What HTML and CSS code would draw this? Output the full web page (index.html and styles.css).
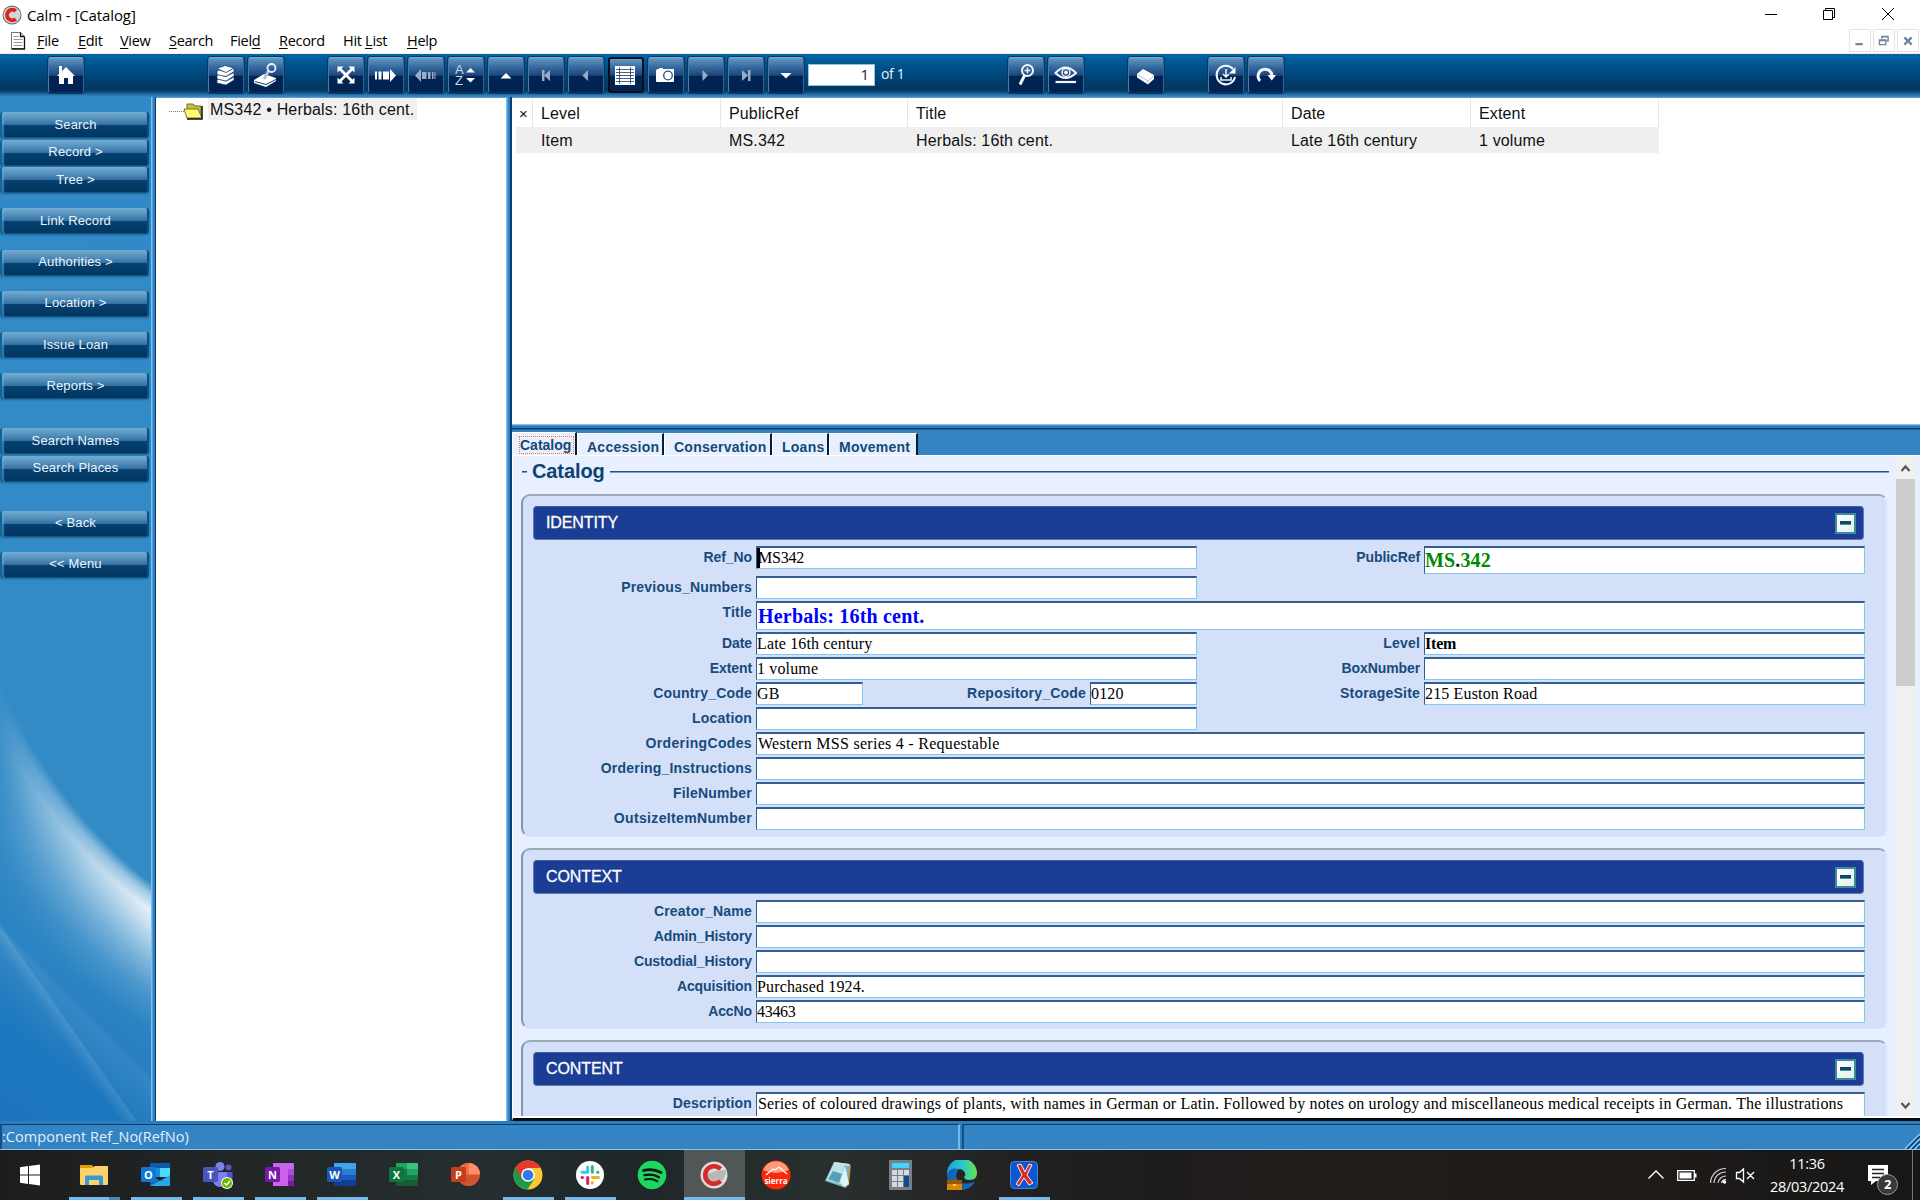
FILE: index.html
```html
<!DOCTYPE html>
<html lang="en">
<head>
<meta charset="utf-8">
<title>Calm - [Catalog]</title>
<link rel="stylesheet" href="styles.css">
</head>
<body>
<div class="window">
  <header class="titlebar">
    <svg class="app-icon" viewBox="0 0 20 20"><circle cx="10" cy="10" r="9.5" fill="#666"/><circle cx="10" cy="10" r="8.6" fill="#d5d5d5"/><path d="M13.800 6A5.300 5.300 0 1 0 13.800 14" fill="none" stroke="#d9261c" stroke-width="3.800"/></svg>
    <span class="title">Calm - [Catalog]</span>
    <svg class="win-controls" viewBox="0 0 150 30" fill="none" stroke="#000"><path d="M5 14.5h12M63.500 10.500h9v9h-9zM65.500 10v-1.500h9v9h-2M122 8l12 12M134 8l-12 12"/></svg>
  </header>
  <nav class="menubar">
    <svg class="doc-icon" viewBox="0 0 16 18"><path d="M1.500 .5h9l4 4v12h-13z" fill="#fff" stroke="#777"/><path d="M14.500 5v12h-13M10.500 .5v4h4" fill="none" stroke="#111" stroke-width="1.300"/><path d="M3.500 4.500h5M3.500 7.500h9M3.500 10.500h9M3.500 13.500h9" stroke="#999"/></svg>
    <div class="menus"><span><u>F</u>ile</span><span><u>E</u>dit</span><span><u>V</u>iew</span><span><u>S</u>earch</span><span>Fiel<u>d</u></span><span><u>R</u>ecord</span><span>Hit <u>L</u>ist</span><span><u>H</u>elp</span></div>
    <div class="child-controls">
      <svg viewBox="0 0 22 22"><path d="M6 15h8" stroke="#71859a" stroke-width="2.500"/></svg>
      <svg viewBox="0 0 22 22" fill="none" stroke="#71859a" stroke-width="1.500"><path d="M6 10.500h7v5h-7zM8.500 9V6.500h7v5H14M6 11h7M8.500 7h7"/></svg>
      <svg viewBox="0 0 22 22"><path d="M7 7.500l8 8M15 7.500l-8 8" stroke="#71859a" stroke-width="2.600"/></svg>
    </div>
  </nav>

  <div class="toolbar">
    <div class="group g-home">
      <div class="tb"><svg viewBox="0 0 36 36"><path d="M9 19l9-9 9 9h-2v8h-5v-6h-4v6h-5v-8zM11 9h3v5l-3 3z" fill="#fff"/></svg></div>
    </div>
    <div class="group g-data">
      <div class="tb"><svg viewBox="0 0 36 36" fill="#fff" stroke="#123b6b" stroke-width=".7"><path d="M9 23l2-1 7 2 8-4v3l-8 5-9-2z"/><path d="M9 18.500l2-1 7 2 8-4v3.500l-8 5-9-2z"/><path d="M9 14l2-1 7 2 8-4v3.500l-8 5-9-2z"/><path d="M9 11.500l8-3 9 2.500-8 4.500z"/></svg></div>
      <div class="tb"><svg viewBox="0 0 36 36"><path d="M6 23l10-6 12 4v3l-10 6-12-4z" fill="#fff"/><path d="M7 24.500l11 3 10-5" stroke="#123b6b" fill="none"/><path d="M16 22l5-9" stroke="#aebfda" stroke-width="3"/><circle cx="23.500" cy="11" r="4" fill="none" stroke="#e9eff8" stroke-width="1.800"/></svg></div>
    </div>
    <div class="group g-nav">
      <div class="tb"><svg viewBox="0 0 36 36"><path d="M12 12l12 12M24 12L12 24" stroke="#fff" stroke-width="2.800"/><path d="M9.500 9.500h6l-6 6zM26.500 9.500v6l-6-6zM9.500 26.500v-6l6 6zM26.500 26.500h-6l6-6z" fill="#fff"/></svg></div>
      <div class="tb"><svg viewBox="0 0 36 36" fill="#fff"><path d="M7 14.500h2v8H7zM10.500 14.500h3v8h-3zM15 14.500h6v8h-6zM22 12l6 6.500-6 6.500z"/></svg></div>
      <div class="tb"><svg viewBox="0 0 36 36" fill="#9aabc6"><path d="M13 12v13l-6-6.500zM14 15h4.500v7H14zM20 15h2.500v7H20zM24 15h1.500v7H24zM26.500 15h1v7h-1z"/></svg></div>
      <div class="tb az"><span class="letters"><b>A</b><b>Z</b></span><svg viewBox="0 0 36 36" fill="#fff"><path d="M18 15.500h9L22.500 11zM18 21h9l-4.500 4.500z"/></svg></div>
      <div class="tb"><svg viewBox="0 0 36 36" fill="#fff"><path d="M12.500 21.500h11L18 16z"/></svg></div>
      <div class="tb"><svg viewBox="0 0 36 36" fill="#9aabc6"><path d="M14 13h2.500v11H14zM22 13v11l-6-5.500z"/></svg></div>
      <div class="tb"><svg viewBox="0 0 36 36" fill="#9aabc6"><path d="M20 13v11l-5.500-5.500z"/></svg></div>
      <div class="tb active"><svg viewBox="0 0 36 36"><path d="M7 9h20v19H7z" fill="#fff"/><path d="M8 12.500h18M8 15.500h18M8 18.500h18M8 21.500h18M8 24.500h18M11.500 10v17M22.500 10v17" stroke="#1d3b66" stroke-width=".8"/></svg></div>
      <div class="tb"><svg viewBox="0 0 36 36"><path d="M8 14q0-2 2-2h1v-1h4v1h11v12q0 1-1 1H9q-1 0-1-1z" fill="#fff"/><circle cx="20" cy="18.500" r="4.300" fill="none" stroke="#274f84" stroke-width="1.300"/></svg></div>
      <div class="tb"><svg viewBox="0 0 36 36" fill="#9aabc6"><path d="M14.500 13v11l5.500-5.500z"/></svg></div>
      <div class="tb"><svg viewBox="0 0 36 36" fill="#9aabc6"><path d="M20 13h2.500v11H20zM14 13v11l6-5.500z"/></svg></div>
      <div class="tb"><svg viewBox="0 0 36 36" fill="#fff"><path d="M12.500 16h11L18 21.500z"/></svg></div>
      <div class="page-no">1</div><span class="page-of">of 1</span>
    </div>
    <div class="group g-view">
      <div class="tb"><svg viewBox="0 0 36 36" fill="none" stroke="#f2f6fb"><circle cx="19.500" cy="13.500" r="5.500" stroke-width="2"/><path d="M19.500 10.500v6M16.500 13.500h6" stroke-width="1.500"/><path d="M16.500 18.500l-4.500 9" stroke-width="3"/></svg></div>
      <div class="tb"><svg viewBox="0 0 36 36" fill="none" stroke="#f2f6fb"><path d="M7.500 16q10-11 20.500 0q-10.500 10-20.500 0z" stroke-width="2"/><circle cx="18" cy="15.500" r="4" stroke-width="1.500"/><circle cx="18" cy="15.500" r="1.500" fill="#fff"/><path d="M7.500 25h20.500" stroke-width="2.200"/></svg></div>
    </div>
    <div class="group g-book">
      <div class="tb"><svg viewBox="0 0 36 36"><path d="M9 17l6-5 11 6v4l-6 5.500-11-7z" fill="#fff"/><path d="M9.500 17.500l10.500 6.500 6-5.500M20 24v3" stroke="#a9b5c9" stroke-width=".9" fill="none"/></svg></div>
    </div>
    <div class="group g-sync">
      <div class="tb"><svg viewBox="0 0 36 36" fill="none" stroke="#f2f6fb" stroke-width="2"><path d="M25 12A9.300 9.300 0 1 0 27 20"/><path d="M27.500 10v6.500H21z" fill="#fff" stroke="none"/><path d="M18 12v8M15 17l3 3 3-3M13 20v3h10v-3" stroke-width="1.500"/></svg></div>
      <div class="tb"><svg viewBox="0 0 36 36"><path d="M12 24a7 7 0 1 1 12-6" fill="none" stroke="#f2f6fb" stroke-width="3"/><path d="M19.500 18H28l-4.200 5.500z" fill="#fff"/></svg></div>
    </div>
  </div>

  <main class="workspace">
    <aside class="sidebar">
      <button>Search</button><button class="near">Record &gt;</button><button class="near">Tree &gt;</button>
      <button class="mid">Link Record</button><button class="mid">Authorities &gt;</button><button class="mid">Location &gt;</button><button class="mid">Issue Loan</button><button class="mid">Reports &gt;</button>
      <button class="far">Search Names</button><button class="near">Search Places</button>
      <button class="far">&lt; Back</button><button class="mid">&lt;&lt; Menu</button>
    </aside>
    <div class="vsplit first"></div>
    <section class="tree">
      <svg viewBox="0 0 34 18"><path d="M0 9.500h15" stroke="#777" stroke-dasharray="1 1"/><path d="M18 2h6l2 2h6v12H18z" fill="#c8c51e" stroke="#666"/><path d="M15 7h14l4 9H18z" fill="#fffb78" stroke="#77751d"/><path d="M33 4v13H18" fill="none" stroke="#111" stroke-width="1.500"/></svg>
      <span class="tree-label">MS342 • Herbals: 16th cent.</span>
    </section>
    <div class="vsplit"></div>
    <section class="content">
      <div class="hits">
        <div class="hit head"><span class="x">×</span><span>Level</span><span>PublicRef</span><span>Title</span><span>Date</span><span>Extent</span></div>
        <div class="hit row"><span></span><span>Item</span><span>MS.342</span><span>Herbals: 16th cent.</span><span>Late 16th century</span><span>1 volume</span></div>
      </div>
      <div class="hsplit"></div>
      <div class="tabs"><span class="tab current"><i>Catalog</i></span><span class="tab t-acc">Accession</span><span class="tab t-con">Conservation</span><span class="tab t-loan">Loans</span><span class="tab t-move">Movement</span></div>
      <div class="record">
        <div class="form">
          <div class="legend"><hr class="stub"><h1>Catalog</h1><hr></div>

          <div class="panel identity">
            <div class="panel-head"><h2>IDENTITY</h2><span class="minus"></span></div>
            <div class="fields r30"><label class="snug">Ref_No</label><div class="box caret">MS342</div><label class="snug">PublicRef</label><div class="box tall28 green">MS<em>.</em>342</div></div>
            <div class="fields"><label>Previous_Numbers</label><div class="box"></div></div>
            <div class="fields r31"><label>Title</label><div class="box wide tall29 blue">Herbals: 16th cent.</div></div>
            <div class="fields"><label class="snug">Date</label><div class="box">Late 16th century</div><label>Level</label><div class="box strong">Item</div></div>
            <div class="fields"><label class="snug">Extent</label><div class="box">1 volume</div><label class="snug">BoxNumber</label><div class="box"></div></div>
            <div class="fields"><label>Country_Code</label><div class="pair"><div class="box">GB</div><label>Repository_Code</label><div class="box">0120</div></div><label>StorageSite</label><div class="box">215 Euston Road</div></div>
            <div class="fields"><label>Location</label><div class="box"></div></div>
            <div class="fields"><label class="loose">OrderingCodes</label><div class="box wide codes">Western MSS series 4 - Requestable</div></div>
            <div class="fields"><label>Ordering_Instructions</label><div class="box wide"></div></div>
            <div class="fields"><label>FileNumber</label><div class="box wide"></div></div>
            <div class="fields"><label class="loose">OutsizeItemNumber</label><div class="box wide"></div></div>
          </div>

          <div class="panel context">
            <div class="panel-head"><h2>CONTEXT</h2><span class="minus"></span></div>
            <div class="fields"><label>Creator_Name</label><div class="box wide"></div></div>
            <div class="fields"><label class="snug">Admin_History</label><div class="box wide"></div></div>
            <div class="fields"><label class="snug">Custodial_History</label><div class="box wide"></div></div>
            <div class="fields"><label class="snug">Acquisition</label><div class="box wide">Purchased 1924.</div></div>
            <div class="fields"><label class="snug">AccNo</label><div class="box wide digits">43463</div></div>
          </div>

          <div class="panel description">
            <div class="panel-head"><h2>CONTENT</h2><span class="minus"></span></div>
            <div class="fields"><label>Description</label><div class="box wide open desc">Series of coloured drawings of plants, with names in German or Latin. Followed by notes on urology and miscellaneous medical receipts in German. The illustrations</div></div>
          </div>
        </div>
        <div class="scrollbar">
          <svg viewBox="0 0 19 23"><path d="M5.500 15l4-4.500 4 4.500" fill="none" stroke="#555" stroke-width="2.200"/></svg>
          <div class="thumb"></div>
          <svg class="down" viewBox="0 0 19 23"><path d="M5.500 10l4 4.500 4-4.500" fill="none" stroke="#555" stroke-width="2.200"/></svg>
        </div>
      </div>
    </section>
  </main>

  <footer class="statusbar">
    <div class="status-main">:Component Ref_No(RefNo)</div>
    <div class="status-side"><svg viewBox="0 0 16 16"><path d="M1 16L16 1M6 16L16 6M11 16l5-5" stroke="#9bd0f5" stroke-width="1.500"/><path d="M3 16L16 3M8 16l8-8M13 16l3-3" stroke="#063b6c" stroke-width="1.500"/></svg></div>
  </footer>
</div>

<div class="taskbar">
  <div class="task start"><svg viewBox="0 0 30 30" fill="#fff"><path d="M5 7.200l8-1.200v8.500H5zM14 5.900L25 4.500v10H14zM5 15.500h8V24l-8-1.200zM14 15.500h11v10l-11-1.400z"/></svg></div>
  <div class="task run more"><svg viewBox="0 0 30 30"><path d="M1 5h12l2 3h-14z" fill="#e39a0b"/><path d="M1 8h12l3-2h13v18q0 1-1 1H2q-1 0-1-1z" fill="#fdd367"/><path d="M6 25v-8q0-1.500 1.500-1.500h15q1.500 0 1.500 1.500v8h-4v-5h-10v5z" fill="#3a96dd"/></svg></div>
  <div class="task run"><svg viewBox="0 0 30 30"><path d="M10 3h18q1 0 1 1v5H9V4q0-1 1-1z" fill="#0a5ea9"/><path d="M9 8h10v9H9z" fill="#1490df"/><path d="M19 8h10v9H19z" fill="#50d9ff"/><path d="M9 15l10 6 10-6v10q0 1-1 1H10q-1 0-1-1z" fill="#28a8ea"/><path d="M9 26l20-11-10 6-10-4z" fill="#0a66b8"/><rect y="7" width="15" height="15" rx="1.500" fill="#0f78d4"/><text x="7.500" y="18.500">O</text></svg></div>
  <div class="task run"><svg viewBox="0 0 30 30"><circle cx="17" cy="6.500" r="4.500" fill="#7b83eb"/><circle cx="25.500" cy="7.500" r="3" fill="#5059c9"/><path d="M20 12h9.500v8q0 4-4 4H20z" fill="#5059c9"/><path d="M10 12h14v8a7 7 0 0 1-14 0z" fill="#7b83eb"/><rect y="7" width="15" height="15" rx="1.500" fill="#4b53bc"/><text x="7.500" y="18.500">T</text><circle cx="24" cy="23" r="6" fill="#fff"/><circle cx="24" cy="23" r="5" fill="#6bb700"/><path d="M21.500 23l2 2 3.500-4" fill="none" stroke="#fff" stroke-width="1.500"/></svg></div>
  <div class="task run"><svg viewBox="0 0 30 30"><path d="M8 3h20q1 0 1 1v21q0 1-1 1H8z" fill="#ca64ea"/><path d="M23 9h6v6h-6z" fill="#ae4bd5"/><path d="M23 15h6v6h-6z" fill="#9332bf"/><path d="M23 21h6v4q0 1-1 1h-5z" fill="#7719aa"/><rect y="7" width="15" height="15" rx="1.500" fill="#7719aa"/><text x="7.500" y="18.500">N</text></svg></div>
  <div class="task run"><svg viewBox="0 0 30 30"><path d="M7 4q0-1 1-1h20q1 0 1 1v5H7z" fill="#41a5ee"/><path d="M7 9h22v6H7z" fill="#2b7cd3"/><path d="M7 15h22v5H7z" fill="#185abd"/><path d="M7 20h22v5q0 1-1 1H8q-1 0-1-1z" fill="#103f91"/><rect y="7" width="15" height="15" rx="1.500" fill="#1857b8"/><text x="7.500" y="18.500">W</text></svg></div>
  <div class="task"><svg viewBox="0 0 30 30"><path d="M7 3h11v6H7z" fill="#21a366"/><path d="M18 3h10q1 0 1 1v5H18z" fill="#33c481"/><path d="M7 9h11v11H7z" fill="#107c41"/><path d="M18 9h11v6H18z" fill="#21a366"/><path d="M18 15h11v5H18z" fill="#107c41"/><path d="M7 20h22v5q0 1-1 1H8q-1 0-1-1z" fill="#185c37"/><rect y="7" width="15" height="15" rx="1.500" fill="#0e753c"/><text x="7.500" y="18.500">X</text></svg></div>
  <div class="task"><svg viewBox="0 0 30 30"><circle cx="17.500" cy="14.500" r="11.500" fill="#d35230"/><path d="M6 14.500A11.500 11.500 0 0 1 17.500 3v11.500z" fill="#ed6c47"/><path d="M17.500 3A11.500 11.500 0 0 1 29 14.500H17.500z" fill="#ff8f6b"/><rect y="7" width="15" height="15" rx="1.500" fill="#c43e1c"/><text x="7.500" y="18.500">P</text></svg></div>
  <div class="task run"><svg viewBox="0 0 30 30"><circle cx="15" cy="15" r="14.500" fill="#fcc934"/><path d="M15 15L2.500 7.700A14.500 14.500 0 0 0 14.500 29.500l7-11z" fill="#1e9b49"/><path d="M2.400 7.800A14.500 14.500 0 0 1 27.600 8H15l-6.200 10z" fill="#e33b2e"/><circle cx="15" cy="15" r="6.800" fill="#fff"/><circle cx="15" cy="15" r="5.300" fill="#2e7af0"/></svg></div>
  <div class="task run"><svg viewBox="0 0 30 30" fill="none" stroke-width="3" stroke-linecap="round"><circle cx="15" cy="15" r="14" fill="#fff"/><path d="M12.700 7v5.300M7 12.300h5.500" stroke="#36c5f0"/><path d="M17.300 6.500v5.800M22.500 12.300h.5" stroke="#2eb67d"/><path d="M17.500 17.500h6M17.300 22.500v.5" stroke="#ecb22e"/><path d="M12.700 17.500v6M7 17.500h.5" stroke="#e01e5a"/></svg></div>
  <div class="task"><svg viewBox="0 0 30 30" fill="none" stroke="#111" stroke-linecap="round"><circle cx="15" cy="15" r="14.300" fill="#1ed760" stroke="none"/><path d="M6.500 10.500q9-2.500 17.500 2" stroke-width="2.800"/><path d="M7.500 15.200q8-2 14.500 2" stroke-width="2.300"/><path d="M8 19.500q7-1.500 12.500 1.800" stroke-width="2"/></svg></div>
  <div class="task focus"><svg viewBox="0 0 30 30"><circle cx="15" cy="15" r="14.500" fill="#555"/><circle cx="15" cy="15" r="13.500" fill="#ddd"/><path d="M3 18q12-9 24-8A13 13 0 0 1 3 18z" fill="#b8b8b8"/><path d="M21.500 9A8.800 8.800 0 1 0 21.500 21" fill="none" stroke="#d5292a" stroke-width="4.500"/></svg></div>
  <div class="task"><svg viewBox="0 0 30 30"><circle cx="15" cy="15" r="14.500" fill="#f82809"/><path d="M2 10A14 14 0 0 1 28 10q-13 6-26 0z" fill="#ff9a77"/><path d="M5 15l7-6 2 1 4-3 8 7" fill="none" stroke="#fff" stroke-width="1.300"/><text class="sierra" x="15" y="23.500">sierra</text></svg></div>
  <div class="task"><svg viewBox="0 0 30 30"><path d="M11 2l17 3-2 20-3 2z" fill="#b78f4a"/><path d="M11 2l16 2-4 24-21-7z" fill="#78b9c5"/><path d="M11 3l-8 17 14 4 5-20z" fill="#b9e3e7"/><path d="M10 11l9 3-3 9-11-4z" fill="#54a2b4"/><path d="M22 6l4 18-5 3-4-4z" fill="#e0f3f5"/><path d="M11 3l15 2" stroke="#ddd" stroke-width="2"/></svg></div>
  <div class="task"><svg viewBox="0 0 30 30"><path d="M4 0h23v30H4z" fill="#75808b"/><path d="M7 3h17v5H7z" fill="#43d5f8"/><path d="M7 10h5v5H7zM13 10h5v5h-5zM19 10h5v5h-5zM7 16h5v5H7zM13 16h5v5h-5zM7 22h5v5H7zM13 22h5v5h-5z" fill="#d4d9df"/><path d="M19 16h5v11h-5z" fill="#134a8c"/></svg></div>
  <div class="task"><svg viewBox="0 0 30 30"><defs><linearGradient id="edge"><stop stop-color="#1b9de2"/><stop offset=".5" stop-color="#2cc6cf"/><stop offset="1" stop-color="#66e34d"/></linearGradient></defs><path d="M0 14a15 15 0 0 1 30-1q0 7-7 7-6 0-6-3 2-1 1-4-3-6-10-3-6 2-8 4z" fill="url(#edge)"/><path d="M0 14q3-7 12-5-4 4-2 10 4 7 18 3-5 8-14 8A15 15 0 0 1 0 14z" fill="#1266b8"/><path d="M0 20h15v10H0z" fill="#d9860c"/><path d="M0 20h15v4H0z" fill="#9c5904"/><path d="M6 24h3v2H6z" fill="#ffd83d"/></svg></div>
  <div class="task run"><svg viewBox="0 0 30 30"><rect x="1.500" y="1.500" width="27" height="27" rx="4" fill="#0b57cf" stroke="#4a86d8"/><path d="M8 5l4-1 4 8 4-8 3 1-5 10 6 8-4 2-5-7-5 8-3-2 6-9z" fill="#e6291d" stroke="#fff" stroke-width=".9"/></svg></div>

  <div class="tray">
    <svg class="t-chev" viewBox="0 0 20 20"><path d="M2.500 13.500L10 6l7.500 7.500" fill="none" stroke="#fff" stroke-width="1.400"/></svg>
    <svg class="t-batt" viewBox="0 0 20 20"><path d="M.7 5.700h16.600v9.600H.7z" fill="none" stroke="#fff" stroke-width="1.300"/><path d="M2.500 7.500h12v6h-12zM17.500 8.500H19.500v4h-2z" fill="#fff"/></svg>
    <svg class="t-wifi" viewBox="0 0 20 20" fill="none" stroke="#fff" stroke-width="1.200"><path d="M1.500 18A15 15 0 0 1 17 3.500M5 18A11.500 11.500 0 0 1 17 7M9 18a8 8 0 0 1 8-7" stroke="#ccc"/><path d="M12.500 18a4.500 4.500 0 0 1 4.500-3.500"/><circle cx="15.500" cy="17" r="1.200" fill="#fff"/></svg>
    <svg class="t-vol" viewBox="0 0 20 20"><path d="M1.500 7.500h3L8.500 4v13l-4-3.500h-3zM12 7l7 7M19 7l-7 7" fill="none" stroke="#fff" stroke-width="1.300"/></svg>
    <div class="clock"><span>11:36</span><span>28/03/2024</span></div>
    <div class="notice"><svg viewBox="0 0 32 32"><path d="M1 1h20v16H9l-5 4v-4H1z" fill="#fff"/><path d="M5 5.500h12M5 9.500h12M5 13.500h8" stroke="#222" stroke-width="1.300"/><circle cx="20.500" cy="20.500" r="10" fill="#39393a" stroke="#999"/></svg><span class="badge">2</span></div>
  </div>
</div>
</body>
</html>
```
FILE: styles.css
```css
* { box-sizing: border-box; }
body { margin: 0; width: 1920px; height: 1200px; overflow: hidden; display: flex; flex-direction: column; background: #fff; font-family: "Liberation Sans", Arial, sans-serif; }
svg { display: block; flex: none; }
.window { height: 1150px; display: flex; flex-direction: column; }

.titlebar { height: 29px; display: flex; align-items: center; padding: 0 10px 0 2px; font: 15px "Open Sans", sans-serif; letter-spacing: -.1px; }
.app-icon { width: 20px; height: 20px; }
.title { margin-left: 5px; flex: 1; white-space: nowrap; }
.win-controls { width: 150px; height: 30px; }
.menubar { height: 25px; display: flex; align-items: center; padding-left: 10px; font: 14.500px "Open Sans", sans-serif; letter-spacing: -.3px; border-bottom: 1px solid #eee; }
.doc-icon { width: 16px; height: 18px; }
.menus { flex: 1; margin-left: 11px; display: grid; grid-template-columns: 41px 42px 49px 61px 49px 64px 64px auto; }
.menus u { text-underline-offset: 2px; text-decoration-thickness: 1px; }
.child-controls { display: flex; gap: 2px; padding-right: 1px; }
.child-controls svg { width: 22px; height: 23px; border: 1px solid #e3e3e3; }

.toolbar { height: 44px; display: flex; padding: 3px 0 0 48px; background: linear-gradient(#0065ab, #004e86 35%, #00385f 80%, #083f6c 86%, #3484c4 98%); }
.group { display: flex; gap: 4px; align-items: flex-start; }
.g-data { margin-left: 124px; }
.g-nav { margin-left: 44px; width: 680px; }
.g-book { margin-left: 44px; }
.g-sync { margin-left: 44px; }
.tb { width: 36px; height: 36px; border-radius: 3px; border: 1px solid; border-color: #7eadcf #35628f #0c3460 #4a7aa8; background: linear-gradient(#629ac1, #31649a 30%, #1c467d 51%, #002453 53%, #002352); box-shadow: 0 0 0 1px #073864; }
.tb svg { width: 36px; height: 36px; margin: -1px; }
.tb.active { border-color: #090e1a; border-width: 2px; box-shadow: none; }
.tb.active svg { margin: -2px; }
.az { display: flex; }
.az .letters { width: 17px; padding: 6px 0 0 6px; font: 13px/11.500px "Liberation Sans", sans-serif; color: #cbd6e7; }
.az b { display: block; font-weight: 400; }
.az svg { margin-left: -18px; }
.page-no { width: 67px; height: 22px; margin: 7px 0 0; padding-right: 5px; background: #fff; border: 1px solid #8ec4ec; color: #3c101a; font: 15px/19px "Open Sans", sans-serif; text-align: right; }
.page-of { margin: 7px 0 0 2px; font: 14px/20px "Open Sans", sans-serif; color: #e8f2fa; letter-spacing: -.3px; }

.workspace { height: 1024px; display: flex; background: #3483c2; }
.sidebar { width: 151px; padding: 15px 2px 0 0; display: flex; flex-direction: column; position: relative; isolation: isolate; background: linear-gradient(35deg, #1c75bd 0, #1d77be 8%, #2a83c3 17%, #338bc6 26%, #318ac7); }
.sidebar::before { content: ""; position: absolute; inset: 500px 0 0 0; z-index: -1; background: radial-gradient(circle at 455px -97px, #fff0 489px, #ffffff90 499px, #ffffffe0 511px, #ffffffc0 524px, #ffffff70 550px, #ffffff25 580px, #fff0 612px); -webkit-mask-image: linear-gradient(90deg, #0001, #0006 25%, #000b 60%, #000); mask-image: linear-gradient(90deg, #0001, #0006 25%, #000b 60%, #000); }
.sidebar::after { content: ""; position: absolute; inset: 770px 0 0 0; z-index: -1; background: linear-gradient(55deg, #fff0 41%, #ffffff1c 46%, #fff0 47%) 0 50px / 151px 204px no-repeat, linear-gradient(45deg, #fff0 30%, #ffffff12 47%, #fff0 49%); }
.sidebar button { height: 26px; flex: none; margin: 0; padding: 0 0 2px 2px; border: 0; border-radius: 3px; border-left: 2px solid #0e6597; border-right: 2px solid #095184; box-shadow: 0 1px 2px #0a4a7d88, inset 2px 0 1px #6bb2dc88; background: linear-gradient(#77abcf, #4f8ebb 28%, #37719f 48%, #074072 51%, #00375f 95%, #1c5d8d); color: #eaf4fb; font: 13px "Liberation Sans", sans-serif; letter-spacing: .15px; }
.sidebar .near { margin-top: 1.500px; }
.sidebar .mid { margin-top: 15.200px; }
.sidebar .far { margin-top: 29px; }
.vsplit { width: 6px; flex: none; background: linear-gradient(90deg, #7bc0f0 0 1px, #559edb 1px 2px, #2f7fc1 2px 4px, #0a4070 4px 5px, #0d3f6d 5px); }
.first { width: 5px; }
.tree { width: 350px; padding: 0 0 0 13px; background: #fff; display: flex; align-items: flex-start; border-top: 1px solid #5b9bd0; }
.tree svg { width: 34px; height: 18px; margin-top: 4px; }
.tree-label { margin-left: 5px; padding: 1px 3px 2px 2px; height: 22px; background: #f0f0f0; font-size: 16px; line-height: 21px; letter-spacing: .18px; white-space: nowrap; color: #111; }
.content { flex: 1; min-width: 0; display: flex; flex-direction: column; }
.hits { height: 327px; background: #fff; border-top: 1px solid #5b9bd0; padding: 0 0 0 4px; }
.hit { display: grid; width: 1143px; grid-template-columns: 17px 188px 187px 375px 188px 188px; font-size: 16px; color: #111; letter-spacing: .15px; }
.head span { height: 30px; line-height: 31px; padding-left: 8px; border-right: 1px solid #e7e7e7; border-bottom: 1px solid #eee; }
.head .x { padding-left: 3px; font-size: 15px; }
.row { background: #efefef; height: 25px; line-height: 26px; }
.row span { padding-left: 8px; }
.hsplit { height: 6px; background: linear-gradient(#86c5f2 0 1px, #4594d2 1px 2px, #2c7dbf 2px 4px, #073e70 4px 5px, #1b5f9b 5px); }
.tabs { height: 25px; padding-top: 2px; display: flex; align-items: flex-end; background: #3483c2; font-weight: bold; font-size: 14px; color: #134a77; letter-spacing: .25px; }
.tab { height: 22px; background: #e8efff; border-right: 2px solid #081d2d; border-top: 1px solid #fff; border-left: 1px solid #fff; line-height: 26px; padding-left: 9px; white-space: nowrap; }
.current { width: 65px; height: 23px; padding: 2px 0 0 6px; line-height: 18px; }
.current i { display: block; width: 55px; height: 18px; margin-top: 1px; line-height: 17px; border: 1px dotted #f17a24; font-style: normal; letter-spacing: 0; }
.t-acc { width: 87px; }
.t-con { width: 108px; }
.t-loan { width: 57px; }
.t-move { width: 89px; }
.record { height: 666px; display: flex; background: #e8efff; border-top: 1px solid #fff; border-left: 1px solid #fff; border-bottom: 3px solid #040b12; box-shadow: inset 0 -2px #fff; padding-bottom: 2px; overflow: hidden; }
.form { width: 1382px; overflow: hidden; padding: 4px 0 0 9px; }
.legend { height: 23px; display: flex; align-items: center; gap: 5px; margin-right: 6px; }
.legend h1 { margin: 0; font-size: 20px; line-height: 23px; color: #0c4373; letter-spacing: -.1px; }
.legend hr { flex: 1; margin: 0; border: 0; height: 2px; background: #1e5582; border-bottom: 1px solid #7fa1c1; }
.legend .stub { flex: 0 0 5px; }
.panel { width: 1367px; margin-top: 11px; margin-left: -1px; padding: 10px 23px 0 10px; border: 2px solid #d4dff8; border-top-color: #9da9b8; border-left-color: #8595ad; border-right-color: #dfe8fd; border-radius: 9px; background: #d4dff8; }
.identity { height: 343px; }
.context { height: 181px; }
.description { height: 200px; }
.panel-head { height: 34px; margin-bottom: 6px; padding: 0 7px 0 12px; border-radius: 4px; background: #1c3d94; border: 1px solid #5f79bb; border-top-color: #3c5ba8; display: flex; align-items: center; justify-content: space-between; width: 1331px; }
.panel-head h2 { margin: 0; font-size: 16px; font-weight: 400; color: #fff; letter-spacing: -.1px; -webkit-text-stroke: .3px #fff; }
.minus { width: 21px; height: 21px; border: 2px solid #3a8c9e; background: linear-gradient(135deg, #fff, #dff1e9); display: grid; place-items: center; }
.minus::before { content: ""; width: 11px; height: 3px; background: #17455b; border-bottom: 1px solid #3296ad; }
.fields { display: grid; grid-template-columns: 222px 441px 227px 441px; width: 1331px; height: 25px; align-items: start; margin-left: 1px; }
.r30 { height: 30px; }
.r31 { height: 31px; }
label { text-align: right; padding-right: 4px; line-height: 22px; font-size: 14px; font-weight: bold; color: #164b7c; letter-spacing: .2px; white-space: nowrap; }
.snug { letter-spacing: -.1px; }
.loose { letter-spacing: .35px; }
.box { height: 23px; border: 1px solid #2e608f; border-top: 2px solid #355f8f; border-right-color: #86c6f2; border-bottom-color: #86c6f2; background: #fff; padding-left: 0; font: 16px/20px "Liberation Serif", "Times New Roman", serif; color: #000; white-space: nowrap; overflow: hidden; letter-spacing: .15px; }
.wide { grid-column: 2 / 5; }
.tall28 { height: 28px; }
.tall29 { height: 29px; }
.green, .blue { font-size: 20px; line-height: 25px; font-weight: bold; color: #008a00; }
.blue { color: #00f; letter-spacing: .2px; line-height: 26px; padding-left: 1px; }
.green em { font-style: normal; color: #123; }
.strong { font-weight: bold; letter-spacing: -.2px; }
.caret { box-shadow: inset 3px 0 #000; padding-left: 1px; letter-spacing: -.2px; }
.codes { letter-spacing: .28px; padding-left: 1px; }
.digits { letter-spacing: -.3px; }
.pair { display: grid; grid-template-columns: 107px 227px 107px; }
.open { height: 40px; }
.desc { letter-spacing: .147px; padding-left: 1px; }
.scrollbar { width: 19px; margin-left: 1px; margin-right: 5px; background: #f0f0f0; display: flex; flex-direction: column; }
.scrollbar svg { width: 19px; height: 23px; }
.scrollbar .down { margin-top: auto; }
.thumb { width: 19px; height: 207px; background: #cdcdcd; }

.statusbar { height: 29px; display: flex; gap: 2px; background: #2d7cbc; padding-top: 3px; border-bottom: 1px solid #8cc5ec; }
.status-main, .status-side { border-top: 1px solid #073d6d; border-left: 2px solid #164f80; background: #3483c2; }
.status-main { width: 960px; border-right: 2px solid #73b8e8; font: 14.500px/23px "Open Sans", sans-serif; color: #e2f0fb; letter-spacing: .05px; }
.status-side { flex: 1; display: flex; justify-content: flex-end; align-items: flex-end; }
.status-side svg { width: 16px; height: 16px; }

.taskbar { height: 50px; display: flex; gap: 1px; background: linear-gradient(90deg, #1d1d1d, #262e2f 25%, #1f2628 33%, #28302f 43%, #232020 53%, #1f1d1c 60%, #211c19 80%, #171717); }
.task { width: 61px; display: grid; place-items: center; flex: none; border-bottom: 3px solid transparent; padding: 2px 2px 0 0; }
.task svg { width: 30px; height: 30px; }
.start { width: 63px; padding-right: 3px; }
.task text { font: bold 11px "Open Sans", sans-serif; fill: #fff; text-anchor: middle; }
.task .sierra { font-size: 8px; }
.run { background: linear-gradient(#76b9ed, #76b9ed) 5px 100% / 51px 3px no-repeat; background-origin: border-box; background-clip: border-box; }
.more { background-image: linear-gradient(90deg, #76b9ed 79%, #4c85b2 79%); }
.focus { background: #515657; border-bottom-color: #76b9ed; }
.tray { margin-left: auto; width: 274px; display: flex; align-items: center; color: #fff; font-family: "Open Sans", sans-serif; }
.tray svg { width: 20px; height: 20px; }
.t-batt { margin-left: 11px; }
.t-wifi { margin-left: 12px; }
.t-vol { margin-left: 6px; }
.clock { width: 88px; margin-left: 8px; text-align: center; font-size: 14.500px; line-height: 23px; letter-spacing: -.3px; }
.clock span { display: block; }
.notice { margin-left: 16px; width: 46px; height: 50px; border-right: 1px solid #777; position: relative; padding-top: 14px; }
.notice .badge { position: absolute; left: 17px; top: 24px; font: bold 13px/20px "Open Sans", sans-serif; }
.notice svg { width: 32px; height: 32px; }
```
